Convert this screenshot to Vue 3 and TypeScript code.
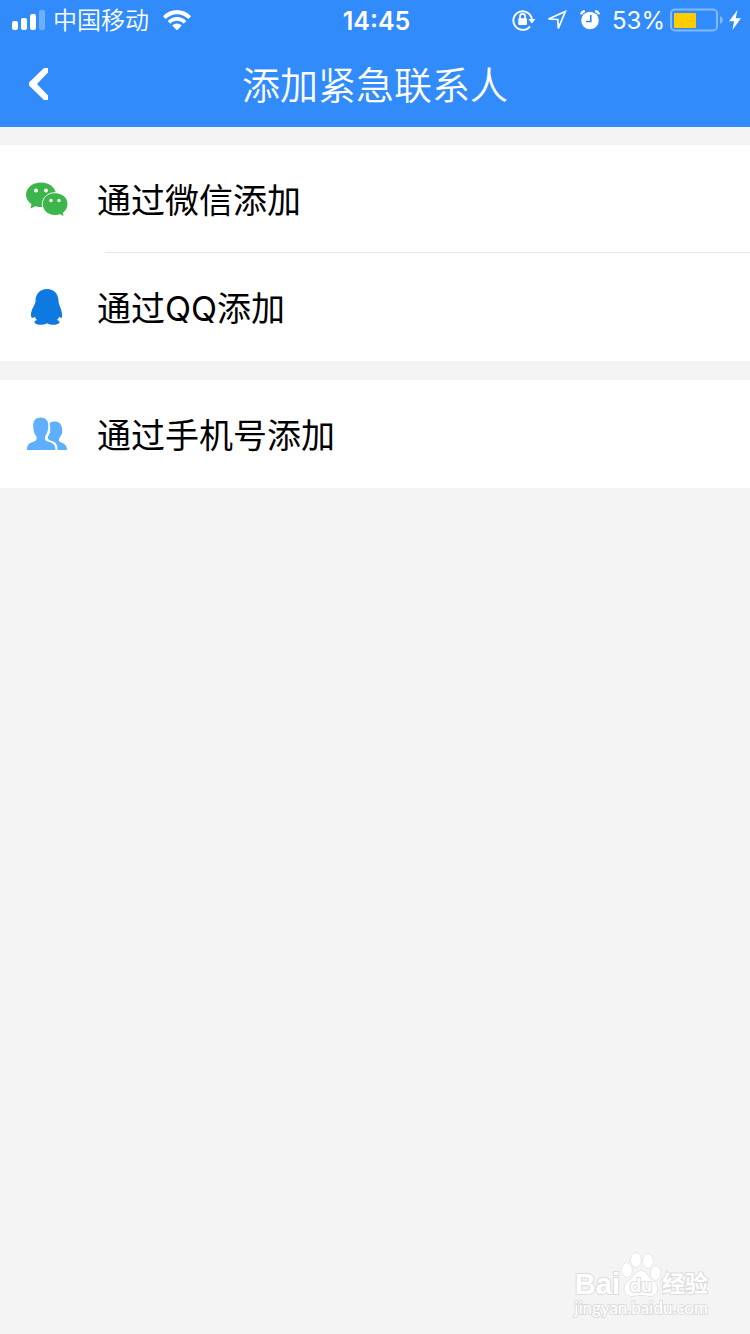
<script setup lang="ts">
type IconName = 'wechat' | 'qq' | 'phone'

interface Option {
  icon: IconName
  label: string
}

const groups: Option[][] = [
  [
    { icon: 'wechat', label: '通过微信添加' },
    { icon: 'qq', label: '通过QQ添加' },
  ],
  [{ icon: 'phone', label: '通过手机号添加' }],
]
</script>

<template>
  <div class="page">
    <header class="top">
      <div class="status">
        <div class="side">
          <svg class="signal" width="33" height="20" viewBox="0 0 33 20" aria-hidden="true">
            <rect x="0" y="11" width="6" height="9" rx="2" />
            <rect x="9" y="8" width="6" height="12" rx="2" />
            <rect x="18" y="4" width="6" height="16" rx="2" />
            <rect x="27" y="0" width="6" height="20" rx="2" opacity="0.3" />
          </svg>
          <span class="carrier">中国移动</span>
          <svg class="wifi" width="28" height="20" viewBox="0 0 28 20" aria-hidden="true">
            <path d="M0 6.2C7.6-2 20.400-2 28 6.200L25.300 9C19 2.600 9 2.600 2.700 9Z" />
            <path d="M4.700 11C9.700 5.600 18.300 5.600 23.300 11L20.600 13.700C17 9.900 11 9.900 7.400 13.700Z" />
            <path d="M9.200 15.600C11.800 12.900 16.200 12.900 18.800 15.600L14 20.400Z" />
          </svg>
        </div>
        <span class="clock">14:45</span>
        <div class="side end">
          <svg class="lock" width="24" height="22" viewBox="0 0 24 22" aria-hidden="true">
            <path d="M18 17.300A9.300 9.300 0 1 1 19.900 10.500" fill="none" stroke="#fff" stroke-width="1.900" />
            <path d="M16.400 10H23.400L19.900 14.500Z" />
            <rect x="6.300" y="9.200" width="8.700" height="6.800" rx="1" />
            <path d="M8 10V7.500a2.600 2.600 0 0 1 5.200 0V10" fill="none" stroke="#fff" stroke-width="1.700" />
          </svg>
          <svg class="location" width="20" height="20" viewBox="0 0 20 20" aria-hidden="true">
            <path d="M1.500 9L18.300 1.500L11.300 18.500L10.800 9.500Z" fill="none" stroke="#fff" stroke-width="1.700" />
          </svg>
          <svg class="alarm" width="20" height="20" viewBox="0 0 20 20" aria-hidden="true">
            <circle cx="10" cy="10.500" r="8.800" />
            <path d="M1 4.300A5 5 0 0 1 4.800 1M19 4.300A5 5 0 0 0 15.200 1" fill="none" stroke="#fff" stroke-width="2.400" />
            <path d="M10.800 5V11.500H6" fill="none" stroke="#318bfb" stroke-width="1.700" />
          </svg>
          <span class="percent">53%</span>
          <svg class="battery" width="53" height="24" viewBox="0 0 53 24" aria-hidden="true">
            <rect x="1" y="1.500" width="46" height="21" rx="4" fill="none" stroke="#83b9fd" stroke-width="2" />
            <rect x="4" y="5" width="22" height="15" rx="1" fill="#fc0" />
            <path d="M50 8Q53 9.500 53 12T50 16Z" fill="#83b9fd" />
          </svg>
          <svg class="bolt" width="12" height="20" viewBox="0 0 12 20" aria-hidden="true">
            <path d="M8.500 0L0 11.300H5L3.500 20L12 8.200H6.700Z" />
          </svg>
        </div>
      </div>
      <nav class="bar">
        <button class="back" type="button" aria-label="返回">
          <svg width="20" height="32" viewBox="0 0 20 32" aria-hidden="true">
            <path d="M15 0H19V4.500L8 16L19 27.500V32H15L0 17.500V14.500Z" />
          </svg>
        </button>
        <h1>添加紧急联系人</h1>
      </nav>
    </header>

    <main>
      <ul v-for="(group, index) in groups" :key="index" class="group">
        <li v-for="option in group" :key="option.icon">
          <button class="row" type="button">
            <svg v-if="option.icon === 'wechat'" class="icon" width="42" height="40" viewBox="0 0 42 40" aria-hidden="true">
              <path fill="#3cb54a" d="M15 3.500C6.500 3.500 0 9 0 15.800C0 19.700 2.200 23 5.500 25.300L4.500 29.500L9.300 27.200Q12 28.100 16 28.100C24 28 30 22.500 30 15.800C30 9 23.500 3.500 15 3.500Z" />
              <path fill="#3cb54a" stroke="#fff" stroke-width="1" d="M29 13.700C21.800 13.700 16.300 18.700 16.300 25C16.300 31.300 21.800 36.500 29 36.500Q31.600 36.500 34 35.700L38.300 37.800L37.200 33.900C40.200 31.800 42 28.500 42 25C42 18.700 36.200 13.700 29 13.700Z" />
              <g fill="#fff">
                <circle cx="10" cy="11.500" r="2" />
                <circle cx="20" cy="11.500" r="2" />
                <circle cx="25" cy="21.500" r="1.700" />
                <circle cx="33" cy="21.500" r="1.700" />
              </g>
            </svg>
            <svg v-else-if="option.icon === 'qq'" class="icon" width="42" height="40" viewBox="0 0 42 40" aria-hidden="true">
              <path fill="#0e79e0" d="M21 2C13.700 2 9.500 7.500 9.500 14C9.500 18 5 22 5 27.500C5 30.500 5.600 31.200 7.300 30.700L9 29.800C9.200 31.500 10 32.200 11.200 33C8.500 33.700 8.200 34.700 8.700 35.700C10.500 38.400 17 38.500 21 36.300C25 38.500 31.500 38.400 33.300 35.700C33.800 34.700 33.500 33.700 30.800 33C32 32.200 32.800 31.500 33 29.800L34.700 30.700C36.400 31.200 36 30.500 36 27.500C36 22 32.500 18 32.500 14C32.500 7.500 28.300 2 21 2Z" />
            </svg>
            <svg v-else class="icon" width="42" height="40" viewBox="0 0 42 40" aria-hidden="true">
              <g fill="#5eafff">
                <path d="M23.500 9.500C24.500 8 26.500 7.500 29 7.500C34 7.500 36.500 11.500 36.200 17.500C35.900 21 34.500 22.500 33 24.500V27C34.500 29.300 41 28.500 41 36H31.500C31.500 31 30.500 28 24.500 26.500C23 26 21.500 25 21.800 22.500C24.500 20 25 14 23.500 9.500Z" />
                <path d="M14.500 3.500C19.800 3.500 22.500 7 22.300 12C22.200 16.800 21 20 19 22.500V25.500C21.500 29.500 29.500 26.500 29.500 36H1C1 26.500 8.500 29.500 10.500 25.500V22.500C8.300 20 7.300 16.800 7.200 12C7 7 9.500 3.500 14.500 3.500Z" />
              </g>
            </svg>
            <span class="label">{{ option.label }}</span>
          </button>
        </li>
      </ul>
    </main>

    <div class="watermark">
      <div class="brand">
        <span class="latin">Bai</span>
        <span class="paw">
          <svg width="40" height="46" viewBox="0 0 40 46" aria-hidden="true">
            <g fill="#fff" stroke="#d8d8d8" stroke-width="1">
              <ellipse cx="6" cy="18" rx="5" ry="7" />
              <ellipse cx="15" cy="8" rx="5" ry="7" />
              <ellipse cx="27" cy="9" rx="5" ry="7" />
              <ellipse cx="34.500" cy="21" rx="5" ry="7" />
              <path d="M20 19C25 19 26.500 24 30 27.500C35 31 37 34 36 38.500C35 43.500 30 45 25 43.500Q20 42.500 15 43.500C10 45 5 43.500 3.500 38.500C2.500 33 6 30.500 10 27C13 24 15 19 20 19Z" />
            </g>
          </svg>
          <span class="du">du</span>
        </span>
        <span class="cjk">经验</span>
      </div>
      <span class="site">jingyan.baidu.com</span>
    </div>
  </div>
</template>

<style>
body {
  background: #f4f4f4;
}
</style>

<style scoped>
.page {
  position: relative;
  min-height: 100vh;
  background: #f4f4f4;
  color: #000;
  font-family: Inter, "Noto Sans CJK SC", sans-serif;
}

.top {
  background: #318bfb;
  color: #fff;
}

.top svg {
  flex: none;
  display: block;
  fill: #fff;
}

.status {
  display: grid;
  grid-template-columns: 1fr auto 1fr;
  align-items: center;
  height: 40px;
  padding: 0 9px 0 12px;
  font-size: 24px;
  line-height: 38px;
}

.side {
  display: flex;
  align-items: center;
}

.end {
  justify-content: flex-end;
}

.carrier,
.clock,
.percent {
  padding-top: 2px;
}

.carrier {
  margin: 0 14px 0 8px;
  font-weight: 350;
}

.clock {
  font-size: 25px;
  font-weight: 600;
}

.location {
  margin-left: 11px;
}

.alarm {
  margin-left: 13px;
}

.percent {
  margin: 0 5px 0 12px;
}

.bolt {
  margin-left: 6px;
}

.bar {
  display: grid;
  grid-template-columns: 60px 1fr 60px;
  align-items: center;
  height: 87px;
}

.back {
  display: flex;
  padding: 0 0 0 29px;
  border: 0;
  background: none;
}

h1 {
  margin: 0;
  padding-top: 2px;
  font-size: 38px;
  font-weight: 350;
  line-height: 56px;
  text-align: center;
}

main {
  display: flex;
  flex-direction: column;
  gap: 19px;
  padding-top: 18px;
}

.group {
  margin: 0;
  padding: 0;
  background: #fff;
  list-style: none;
}

.row {
  display: flex;
  align-items: center;
  gap: 29px;
  width: 100%;
  height: 108px;
  padding: 0 26px;
  border: 0;
  background: none;
  color: inherit;
  font: inherit;
  font-size: 34px;
  line-height: 50px;
  text-align: left;
}

li:not(:last-child) .row {
  background: linear-gradient(#e5e5e5, #e5e5e5) 105px 100% / 100% 1px no-repeat;
}

.icon {
  flex: none;
}

.label {
  padding-top: 4px;
}

.watermark {
  position: absolute;
  right: 42px;
  bottom: 16px;
  color: #fff;
  -webkit-text-stroke: 2px #dcdcdc;
  paint-order: stroke fill;
}

.brand {
  display: flex;
  justify-content: flex-end;
  align-items: flex-end;
  height: 46px;
}

.latin {
  font-family: "Liberation Sans", Arial, sans-serif;
  font-size: 29px;
  font-weight: 700;
  line-height: 28px;
}

.paw {
  display: grid;
  width: 40px;
  margin: 0 1px;
}

.paw > * {
  grid-area: 1 / 1;
}

.du {
  align-self: end;
  justify-self: center;
  font-size: 18px;
  font-weight: 600;
  line-height: 24px;
}

.cjk {
  font-size: 23px;
  font-weight: 700;
  line-height: 28px;
}

.site {
  display: block;
  font-family: Lato, sans-serif;
  font-size: 17px;
  line-height: 20px;
}
</style>
